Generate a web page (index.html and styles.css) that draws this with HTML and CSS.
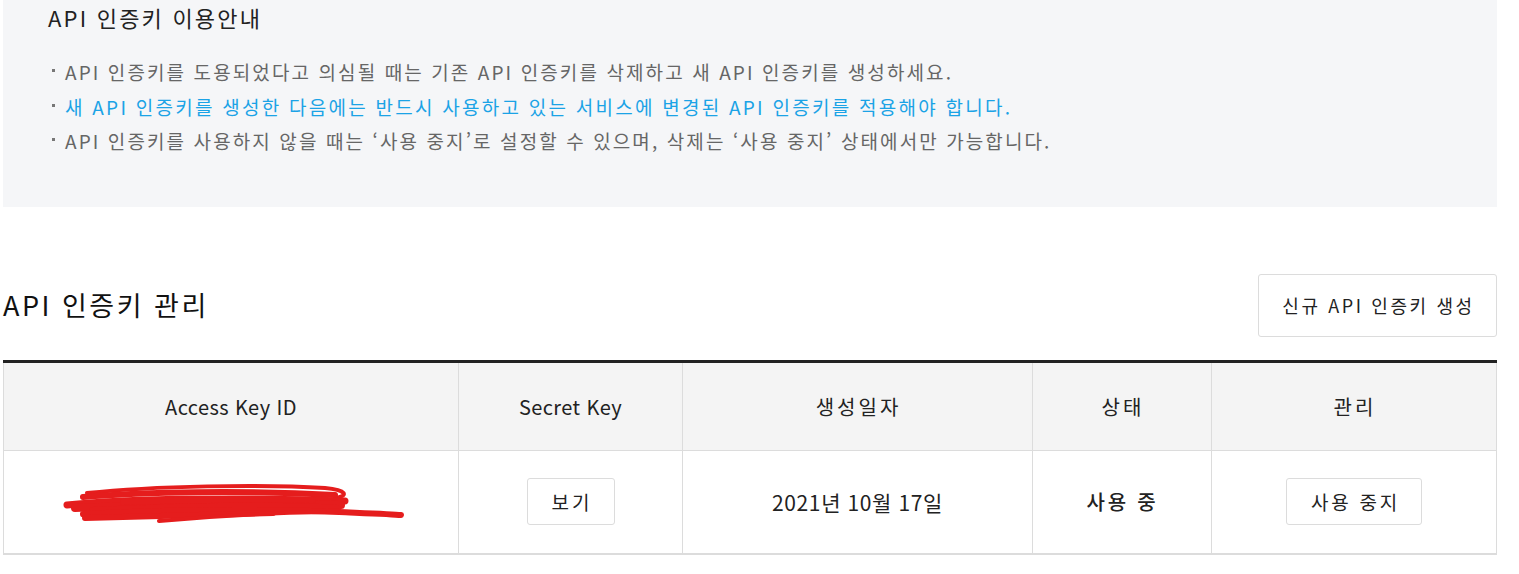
FILE: index.html
```html
<!DOCTYPE html>
<html lang="ko">
<head>
<meta charset="utf-8">
<link rel="stylesheet" href="styles.css">
</head>
<body>
<div class="page">
  <section class="guide">
    <h2 class="guide-title">API 인증키 이용안내</h2>
    <ul class="guide-list">
      <li>API 인증키를 도용되었다고 의심될 때는 기존 API 인증키를 삭제하고 새 API 인증키를 생성하세요.</li>
      <li class="hl">새 API 인증키를 생성한 다음에는 반드시 사용하고 있는 서비스에 변경된 API 인증키를 적용해야 합니다.</li>
      <li>API 인증키를 사용하지 않을 때는 ‘사용 중지’로 설정할 수 있으며, 삭제는 ‘사용 중지’ 상태에서만 가능합니다.</li>
    </ul>
  </section>

  <div class="manage-head">
    <h1 class="manage-title">API 인증키 관리</h1>
    <button class="btn btn-new">신규 API 인증키 생성</button>
  </div>

  <table class="keys">
    <colgroup>
      <col class="c1"><col class="c2"><col class="c3"><col class="c4"><col class="c5">
    </colgroup>
    <thead>
      <tr><th class="lat">Access Key ID</th><th class="lat">Secret Key</th><th class="kor">생성일자</th><th class="kor">상태</th><th class="kor">관리</th></tr>
    </thead>
    <tbody>
      <tr>
        <td class="key-cell">
          <div class="masked">
            <svg width="342" height="42" viewBox="0 0 342 42" class="scribble">
              <g fill="none" stroke="#e51d1d" stroke-linecap="round" stroke-linejoin="round">
                <path d="M24 10 C 90 3, 200 1, 262 5 C 284 7, 286 13, 272 15" stroke-width="4"/>
                <path d="M20 14 C 80 9, 180 7, 272 12" stroke-width="6"/>
                <path d="M4 22 C 60 16, 170 14, 282 18" stroke-width="7"/>
                <path d="M12 25 C 90 21, 200 19, 278 22" stroke-width="8"/>
                <path d="M30 28 C 120 24, 220 22, 274 26" stroke-width="8"/>
                <path d="M20 31 C 100 27, 200 26, 276 29 C 300 30, 330 31, 338 32" stroke-width="6"/>
                <path d="M22 35 C 80 33, 140 32, 210 30" stroke-width="6"/>
                <path d="M96 38 C 140 34, 200 30, 262 29" stroke-width="4"/>
                <path d="M60 19 C 120 17, 200 16, 250 17" stroke-width="6"/>
              </g>
            </svg>
          </div>
        </td>
        <td><button class="btn btn-sm btn-view">보기</button></td>
        <td class="date">2021년 10월 17일</td>
        <td class="status">사용 중</td>
        <td><button class="btn btn-sm btn-stop">사용 중지</button></td>
      </tr>
    </tbody>
  </table>
</div>
</body>
</html>
```

FILE: styles.css
```css
* { box-sizing: border-box; }
html, body { margin: 0; padding: 0; background: #fff; }
body {
  font-family: "Noto Sans CJK KR", "Noto Sans", sans-serif;
  color: #222;
  width: 1519px;
  height: 574px;
  overflow: hidden;
}
.page {
  padding: 0 22px 0 3px;
}
.guide {
  background: #f5f6f8;
  height: 207px;
  padding: 0 45px;
  overflow: hidden;
}
.guide-title {
  margin: 0;
  padding-top: 2px;
  font-size: 22px;
  font-weight: 400;
  line-height: 30px;
  letter-spacing: 2.2px;
  color: #222;
}
.guide-list {
  list-style: none;
  margin: 23px 0 0 0;
  padding: 0;
}
.guide-list li {
  position: relative;
  padding-left: 17px;
  font-size: 19px;
  line-height: 34.5px;
  color: #666;
  letter-spacing: 2.1px;
  white-space: nowrap;
}
.guide-list li.hl { letter-spacing: 2.25px; }
.guide-list li::before {
  content: "";
  position: absolute;
  left: 4px;
  top: 14px;
  width: 3px;
  height: 3px;
  background: #777;
}
.guide-list li.hl { color: #1ba3e6; }

.manage-head {
  display: flex;
  align-items: center;
  justify-content: space-between;
  margin-top: 67px;
  height: 62px;
}
.manage-title {
  margin: 0;
  font-size: 27px;
  font-weight: 400;
  color: #111;
  line-height: 40px;
  letter-spacing: 2.5px;
}
.btn {
  font-family: inherit;
  background: #fff;
  border: 1px solid #dcdcdc;
  border-radius: 3px;
  color: #222;
  cursor: pointer;
}
.btn-new {
  width: 239px;
  height: 63px;
  font-size: 18px;
  letter-spacing: 2.6px;
  padding: 0 0 0 2px;
}
.keys {
  width: 100%;
  margin-top: 24px;
  border-collapse: collapse;
  border-top: 3px solid #222;
  border-bottom: 2px solid #dcdcdc;
  table-layout: fixed;
}
.c1 { width: 455px; }
.c2 { width: 224px; }
.c3 { width: 350px; }
.c4 { width: 179px; }
.c5 { width: auto; }
.keys th {
  background: #f4f4f4;
  height: 89px;
  font-size: 20px;
  font-weight: 400;
  border: 1px solid #dcdcdc;
  border-top: none;
  color: #222;
}
.keys th.lat { letter-spacing: 0.4px; }
.keys th.kor { letter-spacing: 3px; padding-left: 3px; }
.keys td {
  height: 103px;
  text-align: center;
  border: 1px solid #dcdcdc;
  font-size: 20px;
  color: #222;
}
.key-cell { text-align: left !important; }
.masked { padding-left: 58px; padding-top: 4px; }
.scribble { display: block; }
.btn-sm {
  height: 47px;
  font-size: 19px;
  padding: 0 0 0 3px;
}
.btn-view { width: 88px; letter-spacing: 3px; }
.btn-stop { width: 136px; letter-spacing: 2.8px; }
.date { font-size: 21px !important; letter-spacing: 0.6px; }
.status { font-weight: 500; letter-spacing: 2.8px; padding-left: 2px; }
```
